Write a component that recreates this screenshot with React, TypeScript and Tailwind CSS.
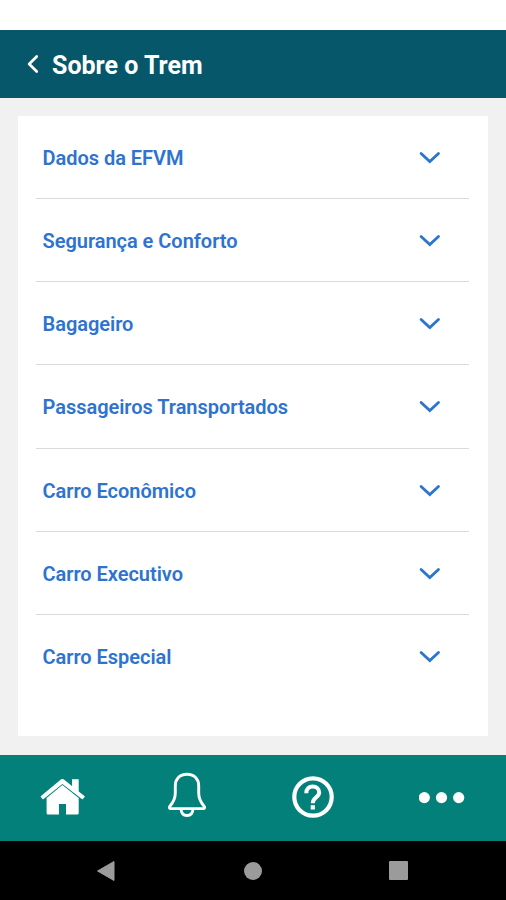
import { useState } from "react";

const sections = [
  "Dados da EFVM",
  "Segurança e Conforto",
  "Bagageiro",
  "Passageiros Transportados",
  "Carro Econômico",
  "Carro Executivo",
  "Carro Especial",
];

const HomeIcon = () => (
  <svg width="45" height="36" viewBox="0 0 45 36" fill="white">
    <path d="M20.9 0.5 Q22.4 -0.6 23.9 0.5 L32 7 V0.3 H38.7 V12.4 L44.4 16.9 Q45 17.4 44.6 18 L42.9 20.1 Q42.4 20.6 41.8 20.1 L22.4 4.9 L3.6 20.1 Q3 20.6 2.5 20.1 L0.8 18 Q0.4 17.4 1 16.9Z" />
    <path d="M22.4 6.1 L38.7 19 V34 Q38.7 35.5 37.2 35.5 H26 V25 H19 V35.5 H8 Q6.6 35.5 6.6 34 V18.9Z" />
  </svg>
);

const BellIcon = () => (
  <svg
    width="40"
    height="46"
    viewBox="0 0 40 46"
    fill="none"
    stroke="white"
    strokeWidth="2.9"
    strokeLinejoin="round"
  >
    <path d="M20 2.3 C12.6 2.3 8.3 7.2 8.3 13.8 V21 C8.3 27 6.3 30.4 2.9 34.2 C1.9 35.4 2.4 36.6 3.8 36.6 H36.2 C37.6 36.6 38.1 35.4 37.1 34.2 C33.7 30.4 31.7 27 31.7 21 V13.8 C31.7 7.2 27.4 2.3 20 2.3Z" />
    <path d="M14 37 C14.2 41.2 16.6 43.5 20 43.5 C23.4 43.5 25.8 41.2 26 37" />
  </svg>
);

const HelpIcon = () => (
  <svg width="42" height="42" viewBox="0 0 42 42" fill="none" stroke="white">
    <circle cx="21" cy="21" r="18.7" strokeWidth="4.2" />
    <path
      d="M14.3 17.2 C14.3 12.9 17 10.6 20.7 10.6 C24.4 10.6 27.2 13 27.2 16.6 C27.2 21.4 20.8 21.4 20.8 27.3"
      strokeWidth="4"
    />
    <path d="M20.8 29.2 V33.5" strokeWidth="4.2" />
  </svg>
);

const MoreIcon = () => (
  <svg width="46" height="12" viewBox="0 0 46 12" fill="white">
    <circle cx="5.3" cy="5.6" r="5.6" />
    <circle cx="22.5" cy="5.6" r="5.6" />
    <circle cx="39.7" cy="5.6" r="5.6" />
  </svg>
);

const App = () => {
  const [selected, setSelected] = useState("");

  return (
    <div className="flex h-[900px] w-[506px] flex-col bg-[#f1f1f1] font-['Roboto',sans-serif]">
      {/* STATUS BAR */}
      <div className="h-[30px] shrink-0 bg-white" />

      {/* HEADER */}
      <header className="flex h-[68px] shrink-0 items-center bg-[#07576a] pl-[26px] text-white">
        <button aria-label="Voltar" className="cursor-pointer">
          <svg width="12" height="20" viewBox="0 0 12 20" fill="none">
            <path
              d="M10.7 2.5 L3.2 10 L10.7 17.5"
              stroke="white"
              strokeWidth="2.7"
              strokeLinecap="round"
              strokeLinejoin="round"
            />
          </svg>
        </button>
        <h1 className="pt-1 pl-3.5 text-[25px] leading-8 font-bold">
          Sobre o Trem
        </h1>
      </header>

      {/* SECTIONS */}
      <main className="grow px-[18px] pt-[18px] pb-[19px]">
        <ul className="h-full bg-white pr-[19px] pl-[18px]">
          {sections.map((section) => (
            <li
              key={section}
              className="h-[83.2px] border-b border-[#dadada] pt-0.5 first:h-[83px] last:border-b-0 last:pt-0"
            >
              <button
                onClick={() => setSelected(section)}
                aria-pressed={selected === section}
                className="flex h-full w-full cursor-pointer items-center justify-between pr-[28.5px] pl-[6.5px] text-[#2d73cf]"
              >
                <span className="text-[20px] leading-7 font-semibold tracking-[-0.03px]">
                  {section}
                </span>
                <svg width="22" height="14" viewBox="0 0 22 14" fill="none">
                  <path
                    d="M2.1 2.4 L10.8 10.6 L19.5 2.4"
                    stroke="currentColor"
                    strokeWidth="2.8"
                    strokeLinecap="round"
                  />
                </svg>
              </button>
            </li>
          ))}
        </ul>
      </main>

      {/* TAB BAR */}
      <nav className="flex h-[86px] shrink-0 items-center bg-[#04807a] pb-0.5 pl-10">
        <HomeIcon />
        <div className="pb-1 pl-[82px]">
          <BellIcon />
        </div>
        <div className="pl-[85px]">
          <HelpIcon />
        </div>
        <div className="pt-px pl-[84.5px]">
          <MoreIcon />
        </div>
      </nav>

      {/* SYSTEM NAVIGATION */}
      <div className="flex h-[59px] shrink-0 items-center bg-black pl-24">
        <svg width="19" height="22" viewBox="0 0 19 22">
          <path
            d="M1.5 11 L18 1.5 V20.5Z"
            fill="#9b9b9b"
            stroke="#9b9b9b"
            strokeLinejoin="round"
          />
        </svg>
        <div className="ml-[129px] h-[18px] w-[18px] rounded-full bg-[#9b9b9b]" />
        <div className="ml-[127px] h-[19px] w-[19px] rounded-[1px] bg-[#9b9b9b]" />
      </div>
    </div>
  );
};

export default App;
